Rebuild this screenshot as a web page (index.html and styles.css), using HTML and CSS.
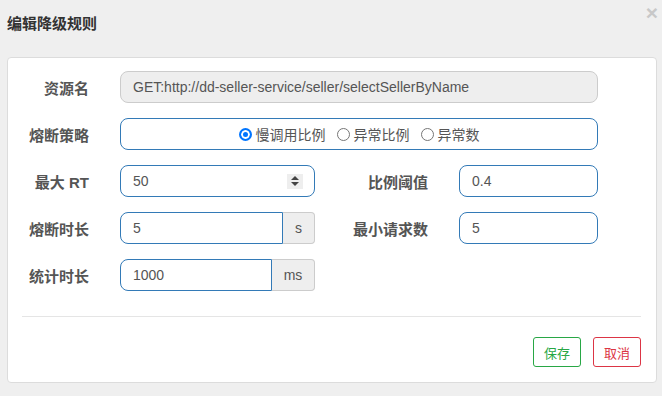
FILE: index.html
```html
<!DOCTYPE html>
<html lang="zh-CN">
<head>
    <meta charset="UTF-8">
    <title>编辑降级规则</title>
    <link rel="stylesheet" href="styles.css">
</head>
<body>
    <div class="modal-header">
        <h4>编辑降级规则</h4>
        <span class="close">×</span>
    </div>

    <div class="panel">
        <div class="form">
            <label class="label">资源名</label>
            <div class="field span-3">
                <input class="input disabled" value="GET:http://dd-seller-service/seller/selectSellerByName" disabled>
            </div>

            <label class="label">熔断策略</label>
            <div class="field span-3">
                <div class="radio-box">
                    <span class="radio checked"></span><span class="radio-text">慢调用比例</span>
                    <span class="radio"></span><span class="radio-text">异常比例</span>
                    <span class="radio"></span><span class="radio-text">异常数</span>
                </div>
            </div>

            <label class="label">最大 RT</label>
            <div class="field">
                <div class="input number">
                    <span>50</span>
                    <span class="spinner">
                        <svg width="10" height="12" viewBox="0 0 10 12"><path d="M5 1 L9 5 L1 5 Z M1 7 L9 7 L5 11 Z" fill="#444"/></svg>
                    </span>
                </div>
            </div>
            <label class="label">比例阈值</label>
            <div class="field">
                <input class="input" value="0.4">
            </div>

            <label class="label">熔断时长</label>
            <div class="field group">
                <input class="input" value="5">
                <span class="addon">s</span>
            </div>
            <label class="label">最小请求数</label>
            <div class="field">
                <input class="input" value="5">
            </div>

            <label class="label">统计时长</label>
            <div class="field group">
                <input class="input" value="1000">
                <span class="addon wide">ms</span>
            </div>
        </div>

        <hr class="divider">

        <div class="actions">
            <button class="btn btn-save">保存</button>
            <button class="btn btn-cancel">取消</button>
        </div>
    </div>
</body>
</html>
```

FILE: styles.css
```css
body {
    margin: 0;
    background: #efefef;
    font-family: "Liberation Sans", Arial, "Noto Sans CJK SC", sans-serif;
    font-size: 14px;
    color: #333;
}
.modal-header {
    position: relative;
    height: 56px;
    padding: 0 7px;
}
.modal-header h4 {
    margin: 0;
    padding-top: 14px;
    font-size: 15px;
    line-height: 20px;
    font-weight: bold;
    color: #333;
}
.close {
    position: absolute;
    right: 4px;
    top: 0;
    font-size: 21px;
    line-height: 26px;
    font-weight: bold;
    color: #c8c8c8;
}
.panel {
    margin: 1px 5px 0 7px;
    background: #fff;
    border: 1px solid #dcdcdc;
    border-radius: 4px;
    padding: 13px 15px 15px 14px;
}
.form {
    display: grid;
    grid-template-columns: 98px 195px 144px 139px;
    grid-auto-rows: 32px;
    row-gap: 15px;
    align-items: center;
}
.label {
    text-align: right;
    padding-right: 31px;
    font-size: 15px;
    font-weight: bold;
    color: #555;
}
.field {
    height: 32px;
    display: flex;
}
.span-3 {
    grid-column: span 3;
}
.input {
    box-sizing: border-box;
    width: 100%;
    height: 32px;
    margin: 0;
    padding: 0 12px;
    border: 1px solid #337ab7;
    border-radius: 8px;
    background: #fff;
    font-family: inherit;
    font-size: 14px;
    color: #555;
    outline: none;
}
.input.disabled {
    background: #eee;
    border-color: #ccc;
    color: #555;
}
.number {
    display: flex;
    align-items: center;
    justify-content: space-between;
    padding-right: 11px;
}
.spinner {
    width: 16px;
    height: 15px;
    background: #eee;
    display: flex;
    align-items: center;
    justify-content: center;
}
.group .input {
    border-radius: 8px 0 0 8px;
}
.addon {
    box-sizing: border-box;
    flex: 0 0 32px;
    height: 32px;
    line-height: 30px;
    text-align: center;
    background: #eee;
    border: 1px solid #ccc;
    border-left: none;
    border-radius: 0 4px 4px 0;
    color: #555;
}
.addon.wide {
    flex-basis: 43px;
}
.radio-box {
    box-sizing: border-box;
    width: 100%;
    height: 32px;
    border: 1px solid #337ab7;
    border-radius: 8px;
    display: flex;
    align-items: center;
    justify-content: center;
    font-family: "Noto Sans CJK SC", sans-serif;
    color: #555;
}
.radio {
    box-sizing: border-box;
    width: 13px;
    height: 13px;
    border: 1px solid #767676;
    border-radius: 50%;
    margin-right: 4px;
}
.radio.checked {
    border: 2px solid #0075ff;
    background: #0075ff;
    box-shadow: inset 0 0 0 2px #fff;
}
.radio-text {
    margin-right: 11px;
}
.radio-text:last-child {
    margin-right: 0;
}
.divider {
    border: none;
    border-top: 1px solid #e5e5e5;
    margin: 25px 0 0 0;
}
.actions {
    display: flex;
    justify-content: flex-end;
    gap: 12px;
    margin-top: 20px;
}
.btn {
    width: 48px;
    height: 30px;
    padding: 0;
    background: #fff;
    border: 1px solid;
    border-radius: 3px;
    font-family: "Noto Sans CJK SC", sans-serif;
    font-size: 13px;
}
.btn-save {
    border-color: #28a745;
    color: #28a745;
}
.btn-cancel {
    border-color: #dc3545;
    color: #dc3545;
}
```
